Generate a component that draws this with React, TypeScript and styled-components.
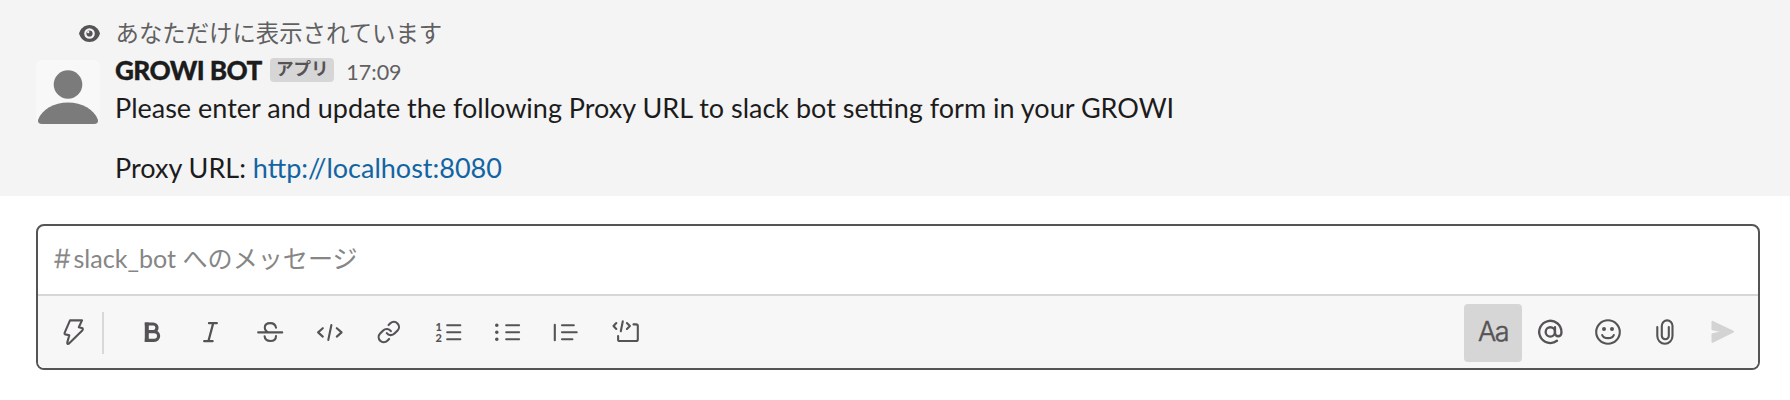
import React from "react";
import styled, { createGlobalStyle } from "styled-components";

const GlobalStyle = createGlobalStyle`
  *, *::before, *::after { box-sizing: border-box; }
  body {
    margin: 0;
    background: #ffffff;
    color: #1d1c1d;
    font-family: Lato, "Noto Sans CJK JP", sans-serif;
  }
`;

const Page = styled.main`
  display: flex;
  flex-direction: column;
  width: 1790px;
  height: 400px;
  overflow: hidden;
`;

const Message = styled.article`
  display: grid;
  grid-template-columns: 100px 1fr;
  column-gap: 15px;
  grid-template-rows: 38px auto;
  height: 196px;
  padding-top: 14px;
  background: #f4f4f4;
`;

const EyeCell = styled.div`
  display: flex;
  justify-content: flex-end;
  align-items: center;
`;

const VisibilityNote = styled.div`
  color: #616061;
  font-size: 23.4px;
  line-height: 38px;
  padding-left: 0.5px;
`;

const AvatarCell = styled.div`
  display: flex;
  justify-content: flex-end;
  align-items: flex-start;
  padding: 8px 0 0;
`;

const Body = styled.div`
  display: flex;
  flex-direction: column;
`;

const Header = styled.header`
  display: flex;
  align-items: baseline;
  height: 37px;
  line-height: 36px;
`;

const Author = styled.span`
  font-size: 26.2px;
  font-weight: 900;
  letter-spacing: -0.6px;
  -webkit-text-stroke: 0.3px currentColor;
`;

const AppBadge = styled.span`
  align-self: flex-start;
  width: 64px;
  height: 24px;
  margin: 6px 0 0 8.5px;
  border-radius: 4px;
  background: #d6d6d6;
  color: #555355;
  font-size: 17.6px;
  font-weight: 700;
  line-height: 22px;
  text-align: center;
`;

const Time = styled.time`
  margin-left: 12px;
  color: #616061;
  font-size: 21.5px;
`;

const Line = styled.p<{ $gap?: number }>`
  margin: ${(p) => p.$gap ?? 0}px 0 0;
  font-size: 27px;
  line-height: 38px;
  white-space: nowrap;
`;

const Link = styled.a`
  color: #1264a3;
  text-decoration: none;
`;

const Composer = styled.section`
  display: flex;
  flex-direction: column;
  width: 1724px;
  height: 146px;
  margin: 28px 0 0 36px;
  border: 2px solid #555455;
  border-radius: 8px;
  overflow: hidden;
`;

const Input = styled.div`
  display: flex;
  align-items: baseline;
  height: 68px;
  padding-left: 16px;
  color: #868686;
  font-size: 25.1px;
  line-height: 64px;
  white-space: pre;
`;

const Hash = styled.span`
  width: 19.5px;
  font-family: Inter, sans-serif;
  font-size: 26px;
  font-weight: 300;
  line-height: 1;
  -webkit-text-stroke: 0.3px currentColor;
`;

const Toolbar = styled.div`
  display: flex;
  align-items: center;
  flex: 1;
  padding: 2px 6px 0 6px;
  border-top: 2px solid #d6d6d6;
  background: #f7f7f7;
`;

const Group = styled.div<{ $gap?: number; $push?: boolean }>`
  display: flex;
  gap: ${(p) => p.$gap ?? 0}px;
  margin-left: ${(p) => (p.$push ? "auto" : "19px")};
`;

const Divider = styled.span`
  width: 2px;
  height: 42px;
  background: #d9d9d9;
`;

const ToolButton = styled.button<{ $active?: boolean; $width?: number }>`
  display: flex;
  align-items: center;
  justify-content: center;
  width: ${(p) => p.$width ?? 58}px;
  height: 58px;
  padding: 0;
  border: 0;
  border-radius: 4px;
  background: ${(p) => (p.$active ? "#d6d6d6" : "transparent")};
  color: #555355;
`;

const FormatLabel = styled.span`
  padding-bottom: 3px;
  font-family: Inter, sans-serif;
  font-size: 27px;
  font-weight: 300;
  letter-spacing: -1.6px;
  -webkit-text-stroke: 0.5px currentColor;
`;

const Glyph = styled.svg`
  display: block;
  width: 32px;
  height: 32px;
  fill: none;
  stroke: currentColor;
  stroke-width: 2.1;
  stroke-linecap: round;
  stroke-linejoin: round;
`;

const Numeral = styled.text`
  fill: currentColor;
  stroke: none;
  font-family: Lato, sans-serif;
  font-size: 11px;
  font-weight: 900;
`;

const Icon = ({ children }: { children: React.ReactNode }) => (
  <Glyph viewBox="0 0 32 32">{children}</Glyph>
);

const formatting: { name: string; drawing: React.ReactNode }[] = [
  {
    name: "bold",
    drawing: (
      <>
        <path strokeWidth="4" strokeLinecap="butt" d="M10.8 5.4V25" />
        <path
          strokeWidth="3.2"
          strokeLinecap="butt"
          d="M8.8 7H17.2a3.7 3.7 0 0 1 0 7.6H10.4M17.2 14.6H18.2a4.4 4.4 0 0 1 0 8.8H8.8"
        />
      </>
    ),
  },
  {
    name: "italic",
    drawing: <path strokeWidth="2.3" d="M14 6.2H21.800M9.200 24.2H17.600M18.2 6.2L13.4 24.2" />,
  },
  {
    name: "strike",
    drawing: (
      <path d="M4.2 15.4H28.2M22 10.6C21.3 7.2 19.2 6.1 16.3 6.1C13 6.1 10.8 7.9 10.8 10.6C10.8 13 12.2 14.6 14.6 15.4M10.6 19.2C10.9 22.5 12.8 24 16.4 24C20 24 22 22.4 22 19" />
    ),
  },
  {
    name: "code",
    drawing: <path d="M8.8 11.2L4.1 15.4L8.8 19.6M17.4 8L14.3 22.9M22.800 11.2L27.600 15.4L22.800 19.6" />,
  },
  {
    name: "link",
    drawing: (
      <g transform="translate(3.6 2.8) scale(1.02)">
        <path d="M10 13a5 5 0 0 0 7.54.54l3-3a5 5 0 0 0-7.07-7.07l-1.72 1.71" />
        <path d="M14 11a5 5 0 0 0-7.54-.54l-3 3a5 5 0 0 0 7.07 7.07l1.71-1.71" />
      </g>
    ),
  },
  {
    name: "ordered",
    drawing: (
      <>
        <Numeral x="3.4" y="13.5">1</Numeral>
        <Numeral x="3.4" y="25">2</Numeral>
        <path d="M15.2 8.2H28.300M15.2 15.3H28.300M15.2 22.3H28.300" />
      </>
    ),
  },
  {
    name: "bullets",
    drawing: (
      <>
        <path d="M15.2 8.2H28.1M15.2 15.3H28.1M15.2 22.3H28.1" />
        <path strokeWidth="3.6" d="M5.8 8.2h0M5.8 15.3h0M5.8 22.3h0" />
      </>
    ),
  },
  {
    name: "quote",
    drawing: <path d="M4.8 7.8V23.3M12 8.2H23.8M12 15.3H26.7M12 22.3H22.4" />,
  },
  {
    name: "block",
    drawing: (
      <path d="M6.3 6L3.5 9L6.3 12M12.800 4.2L10.8 14.2M16.9 6L19.9 9L16.9 12M23.5 7.4H26.1Q27.8 7.4 27.8 9V22.5Q27.8 24 26.1 24H9.7Q8.1 24 8.1 22.4V19" />
    ),
  },
];

export default function App() {
  return (
    <>
      <GlobalStyle />
      <Page>
        <Message>
          <EyeCell>
            <svg width="21" height="17" viewBox="0 0 21 17">
              <path
                fill="#555355"
                d="M0 8.5C1.5 3.5 5.5 0 10.5 0S19.5 3.5 21 8.5C19.5 13.5 15.5 17 10.5 17S1.5 13.5 0 8.5Z"
              />
              <circle cx="10.5" cy="8.5" r="5.3" fill="#f4f4f4" />
              <circle cx="10.5" cy="8.5" r="3.1" fill="#555355" />
              <circle cx="9.2" cy="7.1" r="1.2" fill="#f4f4f4" />
            </svg>
          </EyeCell>
          <VisibilityNote>あなただけに表示されています</VisibilityNote>
          <AvatarCell>
            <svg width="64" height="64" viewBox="0 0 64 64">
              <rect width="64" height="64" rx="5" fill="#f8f8f8" />
              <circle cx="32" cy="24.5" r="14.3" fill="#7b7b7b" />
              <path
                fill="#7b7b7b"
                d="M2 60C6 49 18 42.5 32 42.5S58 49 62 60Q62.5 64 58 64H6Q1.5 64 2 60Z"
              />
            </svg>
          </AvatarCell>
          <Body>
            <Header>
              <Author>GROWI BOT</Author>
              <AppBadge>アプリ</AppBadge>
              <Time>17:09</Time>
            </Header>
            <Line>
              Please enter and update the following Proxy URL to slack bot setting form in your GROWI
            </Line>
            <Line $gap={22}>
              Proxy URL: <Link>http://localhost:8080</Link>
            </Line>
          </Body>
        </Message>
        <Composer>
          <Input>
            <Hash>#</Hash>
            <span>slack_bot へのメッセージ</span>
          </Input>
          <Toolbar>
            <ToolButton>
              <Icon>
                <path d="M13 3.4H25L21.8 10.3L25.6 11.3Q26.3 12.5 25.3 13.5L12 26.6Q10 27.6 10.3 25.4L12.3 18.2L8.3 17.4Q7.2 17 7.6 15.8Z" />
              </Icon>
            </ToolButton>
            <Divider />
            <Group $gap={1.2}>
              {formatting.map((item) => (
                <ToolButton key={item.name}>
                  <Icon>{item.drawing}</Icon>
                </ToolButton>
              ))}
            </Group>
            <Group $push>
              <ToolButton $active>
                <FormatLabel>Aa</FormatLabel>
              </ToolButton>
              <ToolButton>
                <Icon>
                  <g transform="translate(2 1.6) scale(1.11)">
                    <circle cx="12" cy="12" r="4.2" />
                    <path d="M16.2 7.8v5.2a2.9 2.9 0 0 0 5.8 0v-1a10 10 0 1 0-4 8" />
                  </g>
                </Icon>
              </ToolButton>
              <ToolButton $width={56}>
                <Icon>
                  <circle cx="16" cy="15" r="11.8" />
                  <path d="M10.2 18C11.5 22.2 20.5 22.2 21.8 18" />
                  <path strokeWidth="4" d="M12 12h0M20 12h0" />
                </Icon>
              </ToolButton>
              <ToolButton>
                <Icon>
                  <path d="M8.3 10V19a7.6 7.7 0 0 0 15.2 0V8.8a5.35 5.4 0 0 0-10.7 0V18.8a3.5 3.5 0 0 0 7 0V10" />
                </Icon>
              </ToolButton>
              <ToolButton>
                <Icon>
                  <path
                    fill="#d3d3d3"
                    stroke="#d3d3d3"
                    strokeWidth="2"
                    d="M5.5 4.8L26 14.7L5.5 24.8V17.3L17 14.8L5.5 12.2Z"
                  />
                </Icon>
              </ToolButton>
            </Group>
          </Toolbar>
        </Composer>
      </Page>
    </>
  );
}
